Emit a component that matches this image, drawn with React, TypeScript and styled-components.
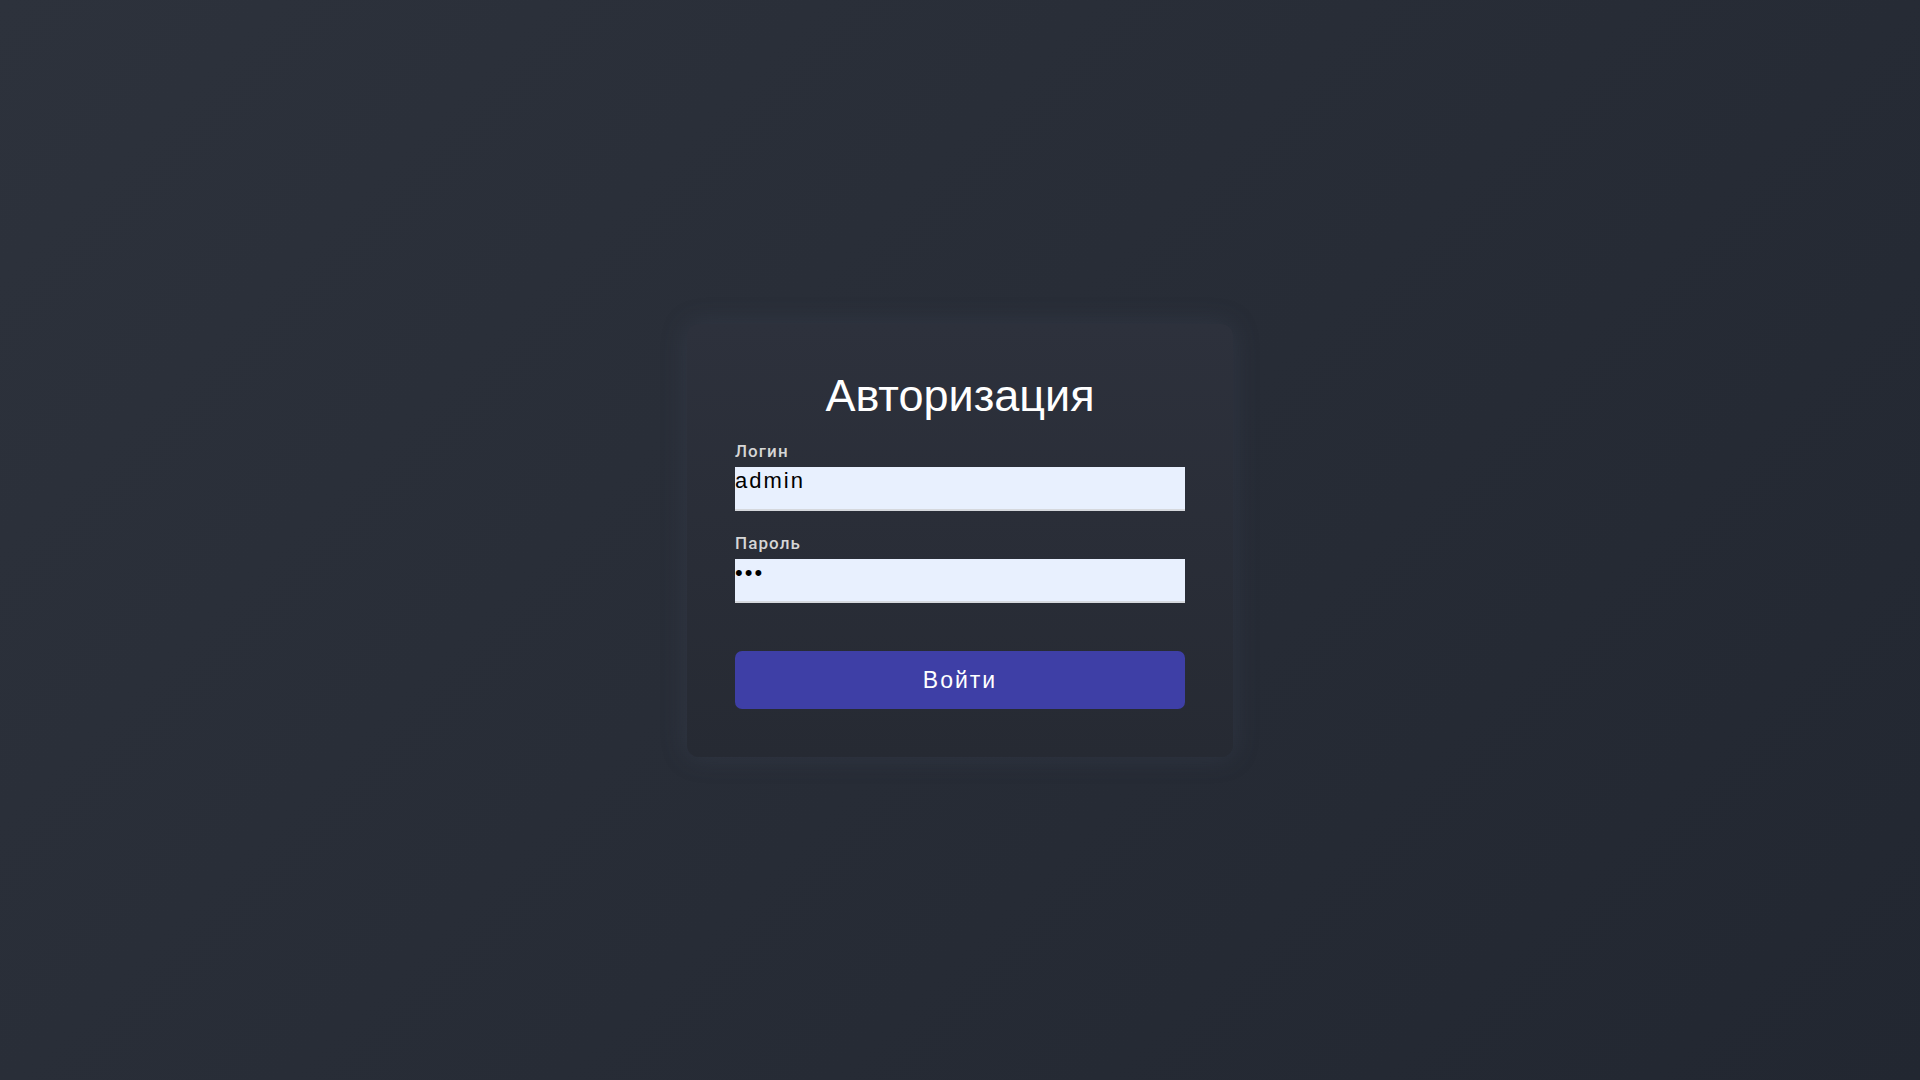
import React from "react";
import styled, { createGlobalStyle } from "styled-components";

const GlobalStyle = createGlobalStyle`
  html, body {
    margin: 0;
    padding: 0;
    height: 100%;
  }
  body {
    background: linear-gradient(135deg, #2d323c 0%, #222731 100%);
    font-family: "Liberation Sans", Arial, sans-serif;
    letter-spacing: 1px;
  }
  #root {
    height: 100%;
  }
`;

const Page = styled.main`
  min-height: 100vh;
  display: flex;
  align-items: center;
  justify-content: center;
`;

const Card = styled.form`
  width: 450px;
  padding: 48px;
  border-radius: 12px;
  background: linear-gradient(to bottom, #2d313c 0%, #262a33 100%);
  box-shadow: 0 0 26px rgba(70, 80, 100, 0.3);
  display: flex;
  flex-direction: column;
`;

const Title = styled.h1`
  margin: 0 0 21px;
  font-family: "Liberation Sans", Arial, sans-serif;
  font-weight: 400;
  font-size: 45px;
  line-height: 48px;
  letter-spacing: 0;
  color: #ffffff;
  text-align: center;
`;

const Field = styled.div`
  display: flex;
  flex-direction: column;
  margin-bottom: ${(p: { $last?: boolean }) => (p.$last ? "48px" : "22px")};
`;

const Label = styled.label`
  font-family: Roboto, "Noto Sans", sans-serif;
  font-size: 17px;
  font-weight: 500;
  line-height: 20px;
  letter-spacing: 1.1px;
  color: #d6d6d6;
  margin-bottom: 6px;
`;

const Input = styled.input`
  box-sizing: border-box;
  width: 100%;
  height: 44px;
  margin: 0;
  padding: 2px 0 15px 0;
  border: none;
  border-bottom: 2px solid #d5d8dd;
  outline: none;
  background: #e8f0fe;
  color: #000000;
  font-family: "Liberation Sans", Arial, sans-serif;
  font-size: 22px;
  letter-spacing: 2px;
`;

const Button = styled.button`
  height: 58px;
  width: 100%;
  border: none;
  border-radius: 7px;
  background: #3e3fa6;
  color: #ffffff;
  font-family: "Liberation Sans", Arial, sans-serif;
  font-size: 23px;
  letter-spacing: 2px;
  padding: 2px 0 0;
  cursor: pointer;
`;

export default function App() {
  return (
    <>
      <GlobalStyle />
      <Page>
        <Card onSubmit={(e) => e.preventDefault()}>
          <Title>Авторизация</Title>
          <Field>
            <Label htmlFor="login">Логин</Label>
            <Input id="login" type="text" defaultValue="admin" />
          </Field>
          <Field $last>
            <Label htmlFor="password">Пароль</Label>
            <Input id="password" type="password" defaultValue="123" />
          </Field>
          <Button type="submit">Войти</Button>
        </Card>
      </Page>
    </>
  );
}
